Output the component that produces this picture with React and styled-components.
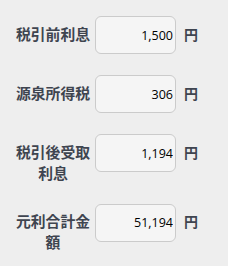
import React from 'react'
import styled, { createGlobalStyle } from 'styled-components'

const GlobalStyle = createGlobalStyle`
    html, body {
        margin: 0;
        padding: 0;
        background: #eeeeee;
    }
`

const rows = [
    { label: '税引前利息', value: '1,500' },
    { label: '源泉所得税', value: '306' },
    { label: '税引後受取利息', value: '1,194' },
    { label: '元利合計金額', value: '51,194' },
]

const App = () => {
    return (
        <>
            <GlobalStyle />
            <Form>
                {rows.map((row, index) => (
                    <Row key={index}>
                        <Label>{row.label}</Label>
                        <Amount readOnly value={row.value} />
                        <Unit>円</Unit>
                    </Row>
                ))}
            </Form>
        </>
    )
}

const Form = styled.div`
    display: flex;
    flex-direction: column;
    gap: 21px;
    padding: 16px 0 0 15px;
    background: #eeeeee;
    min-height: 250px;
`

const Row = styled.div`
    display: flex;
    align-items: baseline;
`

const Label = styled.div`
    width: 76px;
    margin-right: 4px;
    text-align: center;
    font-family: "Noto Sans CJK JP", sans-serif;
    font-weight: 700;
    font-size: 14.8px;
    line-height: 21px;
    color: #3f4550;
`

const Amount = styled.input`
    box-sizing: border-box;
    width: 81px;
    height: 38px;
    padding: 0 2px 0 4px;
    border: 1px solid #cbcbcb;
    border-radius: 6px;
    background: #f5f5f5;
    text-align: right;
    font-family: "Open Sans", sans-serif;
    font-size: 12.5px;
    color: #000;
    outline: none;
`

const Unit = styled.span`
    margin-left: 8px;
    font-family: "Noto Sans CJK JP", sans-serif;
    font-weight: 700;
    font-size: 14px;
    color: #3f4550;
`

export default App
